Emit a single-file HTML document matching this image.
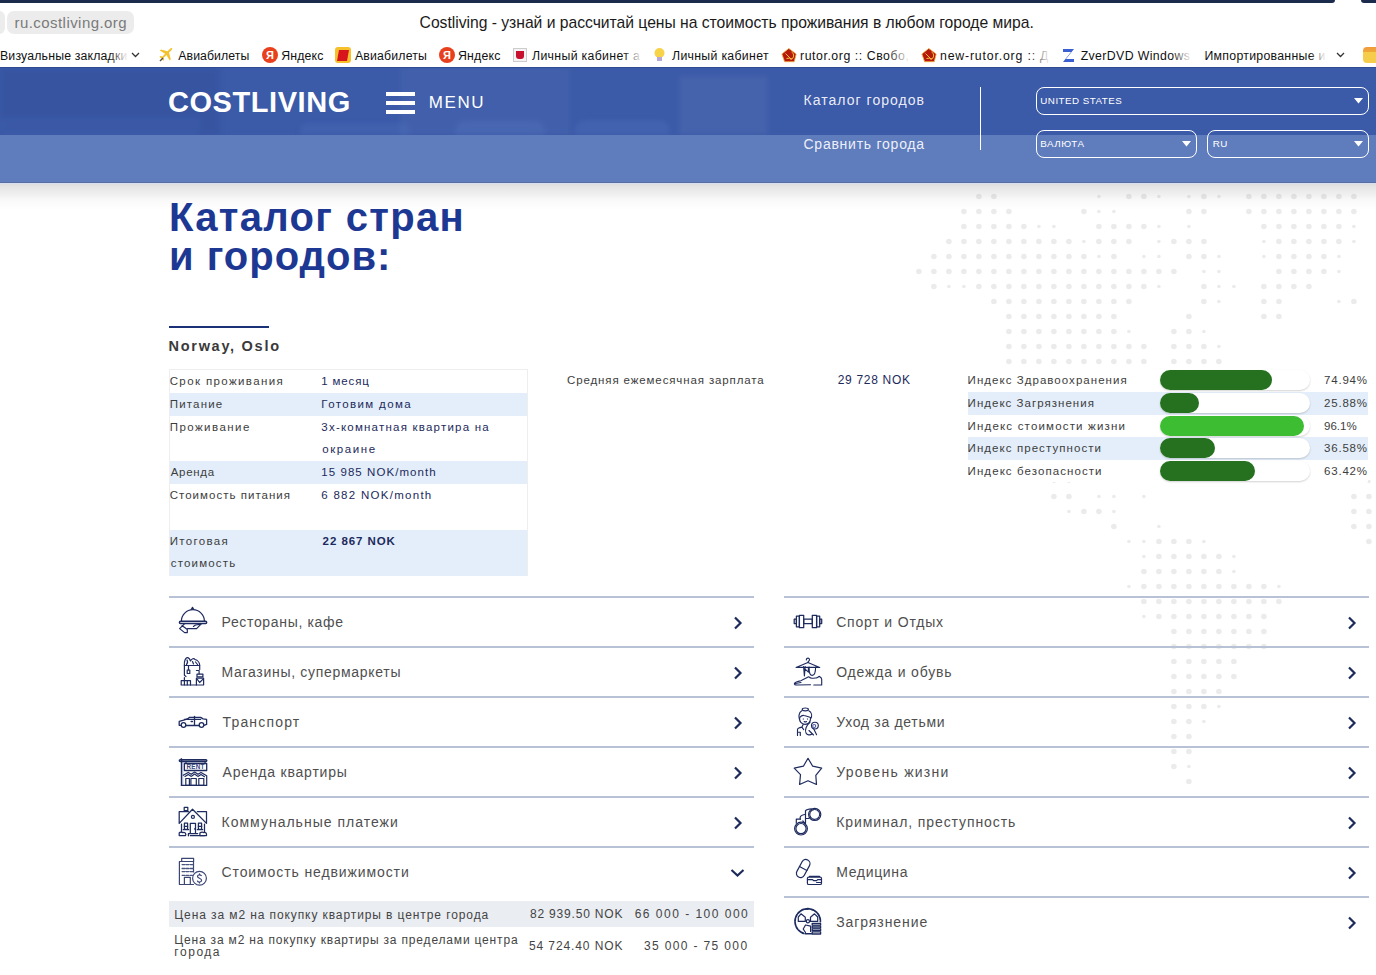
<!DOCTYPE html>
<html><head><meta charset="utf-8">
<style>
*{margin:0;padding:0;box-sizing:border-box}
html,body{width:1376px;height:975px;overflow:hidden;background:#fff;font-family:"Liberation Sans",sans-serif;position:relative}
.t{position:absolute;white-space:nowrap;line-height:1}
svg{overflow:visible}
</style></head><body>
<svg style="position:absolute;left:0;top:0" width="1376" height="975" viewBox="0 0 1376 975"><g fill="#ebebeb"><circle cx="978.9" cy="196.5" r="2.8"/><circle cx="993.9" cy="196.5" r="2.8"/><circle cx="1128.9" cy="196.5" r="2.8"/><circle cx="1143.9" cy="196.5" r="2.8"/><circle cx="1203.9" cy="196.5" r="2.8"/><circle cx="1248.9" cy="196.5" r="2.8"/><circle cx="1263.9" cy="196.5" r="2.8"/><circle cx="1278.9" cy="196.5" r="2.8"/><circle cx="1293.9" cy="196.5" r="2.8"/><circle cx="1308.9" cy="196.5" r="2.8"/><circle cx="1323.9" cy="196.5" r="2.8"/><circle cx="1338.9" cy="196.5" r="2.8"/><circle cx="1353.9" cy="196.5" r="2.8"/><circle cx="1218.9" cy="196.5" r="1.8"/><circle cx="1098.9" cy="196.5" r="1.8"/><circle cx="1158.9" cy="196.5" r="1.8"/><circle cx="1188.9" cy="196.5" r="1.8"/><circle cx="963.9" cy="211.5" r="2.8"/><circle cx="978.9" cy="211.5" r="2.8"/><circle cx="993.9" cy="211.5" r="2.8"/><circle cx="1008.9" cy="211.5" r="2.8"/><circle cx="1083.9" cy="211.5" r="2.8"/><circle cx="1188.9" cy="211.5" r="2.8"/><circle cx="1203.9" cy="211.5" r="2.8"/><circle cx="1248.9" cy="211.5" r="2.8"/><circle cx="1263.9" cy="211.5" r="2.8"/><circle cx="1278.9" cy="211.5" r="2.8"/><circle cx="1293.9" cy="211.5" r="2.8"/><circle cx="1308.9" cy="211.5" r="2.8"/><circle cx="1323.9" cy="211.5" r="2.8"/><circle cx="1338.9" cy="211.5" r="2.8"/><circle cx="1353.9" cy="211.5" r="2.8"/><circle cx="1098.9" cy="211.5" r="1.8"/><circle cx="1113.9" cy="211.5" r="1.8"/><circle cx="963.9" cy="226.5" r="2.8"/><circle cx="978.9" cy="226.5" r="2.8"/><circle cx="993.9" cy="226.5" r="2.8"/><circle cx="1008.9" cy="226.5" r="2.8"/><circle cx="1023.9" cy="226.5" r="2.8"/><circle cx="1098.9" cy="226.5" r="2.8"/><circle cx="1113.9" cy="226.5" r="2.8"/><circle cx="1128.9" cy="226.5" r="2.8"/><circle cx="1143.9" cy="226.5" r="2.8"/><circle cx="1263.9" cy="226.5" r="2.8"/><circle cx="1278.9" cy="226.5" r="2.8"/><circle cx="1293.9" cy="226.5" r="2.8"/><circle cx="1308.9" cy="226.5" r="2.8"/><circle cx="1323.9" cy="226.5" r="2.8"/><circle cx="1338.9" cy="226.5" r="2.8"/><circle cx="1038.9" cy="226.5" r="1.8"/><circle cx="1053.9" cy="226.5" r="1.8"/><circle cx="1158.9" cy="226.5" r="1.8"/><circle cx="1188.9" cy="226.5" r="1.8"/><circle cx="1353.9" cy="226.5" r="1.8"/><circle cx="948.9" cy="241.5" r="2.8"/><circle cx="963.9" cy="241.5" r="2.8"/><circle cx="978.9" cy="241.5" r="2.8"/><circle cx="993.9" cy="241.5" r="2.8"/><circle cx="1008.9" cy="241.5" r="2.8"/><circle cx="1023.9" cy="241.5" r="2.8"/><circle cx="1038.9" cy="241.5" r="2.8"/><circle cx="1053.9" cy="241.5" r="2.8"/><circle cx="1068.9" cy="241.5" r="2.8"/><circle cx="1098.9" cy="241.5" r="2.8"/><circle cx="1113.9" cy="241.5" r="2.8"/><circle cx="1128.9" cy="241.5" r="2.8"/><circle cx="1173.9" cy="241.5" r="2.8"/><circle cx="1188.9" cy="241.5" r="2.8"/><circle cx="1203.9" cy="241.5" r="2.8"/><circle cx="1278.9" cy="241.5" r="2.8"/><circle cx="1293.9" cy="241.5" r="2.8"/><circle cx="1308.9" cy="241.5" r="2.8"/><circle cx="1323.9" cy="241.5" r="2.8"/><circle cx="1338.9" cy="241.5" r="2.8"/><circle cx="1083.9" cy="241.5" r="1.8"/><circle cx="1353.9" cy="241.5" r="1.8"/><circle cx="1263.9" cy="241.5" r="1.8"/><circle cx="1158.9" cy="241.5" r="1.8"/><circle cx="963.9" cy="256.5" r="2.8"/><circle cx="978.9" cy="256.5" r="2.8"/><circle cx="993.9" cy="256.5" r="2.8"/><circle cx="1008.9" cy="256.5" r="2.8"/><circle cx="1023.9" cy="256.5" r="2.8"/><circle cx="1038.9" cy="256.5" r="2.8"/><circle cx="1053.9" cy="256.5" r="2.8"/><circle cx="1068.9" cy="256.5" r="2.8"/><circle cx="1083.9" cy="256.5" r="2.8"/><circle cx="1113.9" cy="256.5" r="2.8"/><circle cx="1188.9" cy="256.5" r="2.8"/><circle cx="1203.9" cy="256.5" r="2.8"/><circle cx="1278.9" cy="256.5" r="2.8"/><circle cx="1293.9" cy="256.5" r="2.8"/><circle cx="1308.9" cy="256.5" r="2.8"/><circle cx="1323.9" cy="256.5" r="2.8"/><circle cx="933.9" cy="256.5" r="2.8"/><circle cx="948.9" cy="256.5" r="2.8"/><circle cx="1098.9" cy="256.5" r="1.8"/><circle cx="1143.9" cy="256.5" r="1.8"/><circle cx="1158.9" cy="256.5" r="1.8"/><circle cx="1218.9" cy="256.5" r="1.8"/><circle cx="1263.9" cy="256.5" r="1.8"/><circle cx="1338.9" cy="256.5" r="1.8"/><circle cx="918.9" cy="271.5" r="2.8"/><circle cx="933.9" cy="271.5" r="2.8"/><circle cx="948.9" cy="271.5" r="2.8"/><circle cx="963.9" cy="271.5" r="2.8"/><circle cx="978.9" cy="271.5" r="2.8"/><circle cx="993.9" cy="271.5" r="2.8"/><circle cx="1008.9" cy="271.5" r="2.8"/><circle cx="1023.9" cy="271.5" r="2.8"/><circle cx="1038.9" cy="271.5" r="2.8"/><circle cx="1053.9" cy="271.5" r="2.8"/><circle cx="1068.9" cy="271.5" r="2.8"/><circle cx="1083.9" cy="271.5" r="2.8"/><circle cx="1098.9" cy="271.5" r="2.8"/><circle cx="1113.9" cy="271.5" r="2.8"/><circle cx="1128.9" cy="271.5" r="2.8"/><circle cx="1143.9" cy="271.5" r="2.8"/><circle cx="1158.9" cy="271.5" r="2.8"/><circle cx="1173.9" cy="271.5" r="2.8"/><circle cx="1278.9" cy="271.5" r="2.8"/><circle cx="1293.9" cy="271.5" r="2.8"/><circle cx="1308.9" cy="271.5" r="2.8"/><circle cx="1323.9" cy="271.5" r="2.8"/><circle cx="1203.9" cy="271.5" r="1.8"/><circle cx="1218.9" cy="271.5" r="1.8"/><circle cx="1338.9" cy="271.5" r="1.8"/><circle cx="978.9" cy="286.5" r="2.8"/><circle cx="993.9" cy="286.5" r="2.8"/><circle cx="1008.9" cy="286.5" r="2.8"/><circle cx="1023.9" cy="286.5" r="2.8"/><circle cx="1038.9" cy="286.5" r="2.8"/><circle cx="1053.9" cy="286.5" r="2.8"/><circle cx="1068.9" cy="286.5" r="2.8"/><circle cx="1083.9" cy="286.5" r="2.8"/><circle cx="1098.9" cy="286.5" r="2.8"/><circle cx="1113.9" cy="286.5" r="2.8"/><circle cx="1128.9" cy="286.5" r="2.8"/><circle cx="1143.9" cy="286.5" r="2.8"/><circle cx="1203.9" cy="286.5" r="2.8"/><circle cx="1263.9" cy="286.5" r="2.8"/><circle cx="1278.9" cy="286.5" r="2.8"/><circle cx="1293.9" cy="286.5" r="2.8"/><circle cx="1308.9" cy="286.5" r="2.8"/><circle cx="933.9" cy="286.5" r="2.8"/><circle cx="963.9" cy="286.5" r="1.8"/><circle cx="1158.9" cy="286.5" r="1.8"/><circle cx="1218.9" cy="286.5" r="1.8"/><circle cx="1233.9" cy="286.5" r="1.8"/><circle cx="948.9" cy="286.5" r="1.8"/><circle cx="993.9" cy="301.5" r="2.8"/><circle cx="1008.9" cy="301.5" r="2.8"/><circle cx="1023.9" cy="301.5" r="2.8"/><circle cx="1038.9" cy="301.5" r="2.8"/><circle cx="1053.9" cy="301.5" r="2.8"/><circle cx="1068.9" cy="301.5" r="2.8"/><circle cx="1083.9" cy="301.5" r="2.8"/><circle cx="1098.9" cy="301.5" r="2.8"/><circle cx="1113.9" cy="301.5" r="2.8"/><circle cx="1128.9" cy="301.5" r="2.8"/><circle cx="1203.9" cy="301.5" r="2.8"/><circle cx="1263.9" cy="301.5" r="2.8"/><circle cx="1278.9" cy="301.5" r="2.8"/><circle cx="1353.9" cy="301.5" r="2.8"/><circle cx="1338.9" cy="301.5" r="1.8"/><circle cx="1218.9" cy="301.5" r="1.8"/><circle cx="1008.9" cy="316.5" r="2.8"/><circle cx="1023.9" cy="316.5" r="2.8"/><circle cx="1038.9" cy="316.5" r="2.8"/><circle cx="1053.9" cy="316.5" r="2.8"/><circle cx="1068.9" cy="316.5" r="2.8"/><circle cx="1083.9" cy="316.5" r="2.8"/><circle cx="1098.9" cy="316.5" r="2.8"/><circle cx="1113.9" cy="316.5" r="2.8"/><circle cx="1188.9" cy="316.5" r="2.8"/><circle cx="1263.9" cy="316.5" r="2.8"/><circle cx="1278.9" cy="316.5" r="2.8"/><circle cx="1008.9" cy="331.5" r="2.8"/><circle cx="1023.9" cy="331.5" r="2.8"/><circle cx="1038.9" cy="331.5" r="2.8"/><circle cx="1053.9" cy="331.5" r="2.8"/><circle cx="1068.9" cy="331.5" r="2.8"/><circle cx="1083.9" cy="331.5" r="2.8"/><circle cx="1098.9" cy="331.5" r="2.8"/><circle cx="1113.9" cy="331.5" r="2.8"/><circle cx="1173.9" cy="331.5" r="2.8"/><circle cx="1188.9" cy="331.5" r="2.8"/><circle cx="1203.9" cy="331.5" r="1.8"/><circle cx="1128.9" cy="331.5" r="1.8"/><circle cx="1008.9" cy="346.5" r="2.8"/><circle cx="1023.9" cy="346.5" r="2.8"/><circle cx="1038.9" cy="346.5" r="2.8"/><circle cx="1053.9" cy="346.5" r="2.8"/><circle cx="1068.9" cy="346.5" r="2.8"/><circle cx="1083.9" cy="346.5" r="2.8"/><circle cx="1098.9" cy="346.5" r="2.8"/><circle cx="1113.9" cy="346.5" r="2.8"/><circle cx="1128.9" cy="346.5" r="2.8"/><circle cx="1143.9" cy="346.5" r="2.8"/><circle cx="1173.9" cy="346.5" r="2.8"/><circle cx="1188.9" cy="346.5" r="2.8"/><circle cx="1203.9" cy="346.5" r="2.8"/><circle cx="1218.9" cy="346.5" r="1.8"/><circle cx="1008.9" cy="361.5" r="2.8"/><circle cx="1023.9" cy="361.5" r="2.8"/><circle cx="1038.9" cy="361.5" r="2.8"/><circle cx="1053.9" cy="361.5" r="2.8"/><circle cx="1068.9" cy="361.5" r="2.8"/><circle cx="1083.9" cy="361.5" r="2.8"/><circle cx="1098.9" cy="361.5" r="2.8"/><circle cx="1113.9" cy="361.5" r="2.8"/><circle cx="1128.9" cy="361.5" r="2.8"/><circle cx="1143.9" cy="361.5" r="2.8"/><circle cx="1173.9" cy="361.5" r="2.8"/><circle cx="1188.9" cy="361.5" r="2.8"/><circle cx="1203.9" cy="361.5" r="2.8"/><circle cx="1218.9" cy="361.5" r="2.8"/><circle cx="1368.9" cy="481.5" r="1.8"/><circle cx="1053.9" cy="481.5" r="1.8"/><circle cx="1068.9" cy="481.5" r="1.8"/><circle cx="1353.9" cy="496.5" r="2.8"/><circle cx="1368.9" cy="496.5" r="2.8"/><circle cx="1053.9" cy="496.5" r="2.8"/><circle cx="1068.9" cy="496.5" r="2.8"/><circle cx="1098.9" cy="496.5" r="1.8"/><circle cx="1113.9" cy="496.5" r="1.8"/><circle cx="1143.9" cy="496.5" r="1.8"/><circle cx="1083.9" cy="511.5" r="2.8"/><circle cx="1098.9" cy="511.5" r="2.8"/><circle cx="1353.9" cy="511.5" r="2.8"/><circle cx="1368.9" cy="511.5" r="2.8"/><circle cx="1113.9" cy="511.5" r="1.8"/><circle cx="1068.9" cy="511.5" r="1.8"/><circle cx="1113.9" cy="526.5" r="2.8"/><circle cx="1368.9" cy="526.5" r="2.8"/><circle cx="1353.9" cy="526.5" r="2.8"/><circle cx="1158.9" cy="526.5" r="1.8"/><circle cx="1368.9" cy="541.5" r="2.8"/><circle cx="1158.9" cy="541.5" r="2.8"/><circle cx="1173.9" cy="541.5" r="2.8"/><circle cx="1188.9" cy="541.5" r="2.8"/><circle cx="1203.9" cy="541.5" r="1.8"/><circle cx="1128.9" cy="541.5" r="1.8"/><circle cx="1143.9" cy="541.5" r="1.8"/><circle cx="1158.9" cy="556.5" r="2.8"/><circle cx="1173.9" cy="556.5" r="2.8"/><circle cx="1188.9" cy="556.5" r="2.8"/><circle cx="1203.9" cy="556.5" r="2.8"/><circle cx="1218.9" cy="556.5" r="2.8"/><circle cx="1233.9" cy="556.5" r="1.8"/><circle cx="1143.9" cy="556.5" r="1.8"/><circle cx="1143.9" cy="571.5" r="2.8"/><circle cx="1158.9" cy="571.5" r="2.8"/><circle cx="1173.9" cy="571.5" r="2.8"/><circle cx="1188.9" cy="571.5" r="2.8"/><circle cx="1203.9" cy="571.5" r="2.8"/><circle cx="1218.9" cy="571.5" r="2.8"/><circle cx="1233.9" cy="571.5" r="1.8"/><circle cx="1143.9" cy="586.5" r="2.8"/><circle cx="1158.9" cy="586.5" r="2.8"/><circle cx="1173.9" cy="586.5" r="2.8"/><circle cx="1188.9" cy="586.5" r="2.8"/><circle cx="1203.9" cy="586.5" r="2.8"/><circle cx="1218.9" cy="586.5" r="2.8"/><circle cx="1233.9" cy="586.5" r="2.8"/><circle cx="1248.9" cy="586.5" r="2.8"/><circle cx="1263.9" cy="586.5" r="2.8"/><circle cx="1128.9" cy="586.5" r="1.8"/><circle cx="1278.9" cy="586.5" r="1.8"/><circle cx="1143.9" cy="601.5" r="2.8"/><circle cx="1158.9" cy="601.5" r="2.8"/><circle cx="1173.9" cy="601.5" r="2.8"/><circle cx="1188.9" cy="601.5" r="2.8"/><circle cx="1203.9" cy="601.5" r="2.8"/><circle cx="1218.9" cy="601.5" r="2.8"/><circle cx="1233.9" cy="601.5" r="2.8"/><circle cx="1248.9" cy="601.5" r="2.8"/><circle cx="1263.9" cy="601.5" r="2.8"/><circle cx="1278.9" cy="601.5" r="2.8"/><circle cx="1158.9" cy="616.5" r="2.8"/><circle cx="1173.9" cy="616.5" r="2.8"/><circle cx="1188.9" cy="616.5" r="2.8"/><circle cx="1203.9" cy="616.5" r="2.8"/><circle cx="1218.9" cy="616.5" r="2.8"/><circle cx="1233.9" cy="616.5" r="2.8"/><circle cx="1248.9" cy="616.5" r="2.8"/><circle cx="1263.9" cy="616.5" r="2.8"/><circle cx="1143.9" cy="616.5" r="1.8"/><circle cx="1173.9" cy="631.5" r="2.8"/><circle cx="1188.9" cy="631.5" r="2.8"/><circle cx="1203.9" cy="631.5" r="2.8"/><circle cx="1218.9" cy="631.5" r="2.8"/><circle cx="1233.9" cy="631.5" r="2.8"/><circle cx="1248.9" cy="631.5" r="2.8"/><circle cx="1263.9" cy="631.5" r="2.8"/><circle cx="1173.9" cy="646.5" r="2.8"/><circle cx="1188.9" cy="646.5" r="2.8"/><circle cx="1203.9" cy="646.5" r="2.8"/><circle cx="1218.9" cy="646.5" r="2.8"/><circle cx="1233.9" cy="646.5" r="2.8"/><circle cx="1248.9" cy="646.5" r="2.8"/><circle cx="1263.9" cy="646.5" r="2.8"/><circle cx="1173.9" cy="661.5" r="2.8"/><circle cx="1188.9" cy="661.5" r="2.8"/><circle cx="1203.9" cy="661.5" r="2.8"/><circle cx="1218.9" cy="661.5" r="2.8"/><circle cx="1233.9" cy="661.5" r="2.8"/><circle cx="1173.9" cy="676.5" r="2.8"/><circle cx="1188.9" cy="676.5" r="2.8"/><circle cx="1203.9" cy="676.5" r="2.8"/><circle cx="1218.9" cy="676.5" r="2.8"/><circle cx="1233.9" cy="676.5" r="2.8"/><circle cx="1203.9" cy="691.5" r="2.8"/><circle cx="1218.9" cy="691.5" r="2.8"/><circle cx="1173.9" cy="691.5" r="2.8"/><circle cx="1188.9" cy="691.5" r="2.8"/><circle cx="1203.9" cy="706.5" r="2.8"/><circle cx="1173.9" cy="706.5" r="2.8"/><circle cx="1188.9" cy="706.5" r="2.8"/><circle cx="1218.9" cy="706.5" r="1.8"/><circle cx="1173.9" cy="721.5" r="2.8"/><circle cx="1188.9" cy="721.5" r="2.8"/><circle cx="1203.9" cy="721.5" r="1.8"/><circle cx="1173.9" cy="736.5" r="2.8"/><circle cx="1188.9" cy="736.5" r="2.8"/><circle cx="1173.9" cy="751.5" r="2.8"/><circle cx="1188.9" cy="751.5" r="2.8"/><circle cx="1173.9" cy="766.5" r="2.8"/><circle cx="1188.9" cy="766.5" r="1.8"/><circle cx="1188.9" cy="781.5" r="2.8"/></g></svg>
<div style="position:absolute;left:0px;top:0px;width:1335px;height:3px;background:#1b2b4e;border-bottom-right-radius:3px"></div>
<div style="position:absolute;left:1361px;top:0px;width:15px;height:3px;background:#1b2b4e;border-bottom-left-radius:3px"></div>
<div style="position:absolute;left:-12px;top:11px;width:17px;height:23px;background:#ececec;border-radius:6px"></div>
<div style="position:absolute;left:7px;top:11px;width:127px;height:23px;background:#ececec;border-radius:7px"></div>
<div class="t" style="left:14.50px;top:14.90px;font-size:15px;color:#7a7a7a;font-weight:400;letter-spacing:0.444px;">ru.costliving.org</div>
<div class="t" style="left:419.60px;top:15.10px;font-size:15.7px;color:#1a1a1a;font-weight:400;letter-spacing:-0.020px;">Costliving - узнай и рассчитай цены на стоимость проживания в любом городе мира.</div>
<div class="t" style="left:0.00px;top:49.60px;font-size:12.3px;color:#111;font-weight:400;letter-spacing:0.167px;">Визуальные закладки</div>
<div style="position:absolute;left:110px;top:44px;width:18px;height:20px;background:linear-gradient(90deg,rgba(255,255,255,0),#fff)"></div>
<svg style="position:absolute;left:131px;top:52px" width="9" height="6" viewBox="0 0 9 6"><path d="M1 1l3.5 3.5L8 1" stroke="#333" stroke-width="1.3" fill="none"/></svg>
<svg style="position:absolute;left:158px;top:47px" width="16" height="16" viewBox="0 0 16 16"><path d="M14.5 1.2c-.8-.6-2 .1-2.7.8L9.6 4.2 3 2.4 1.8 3.5l5.3 3.3-2.6 2.7-2.2-.4-.9.9 2.3 1.5 1.5 2.3.9-.9-.4-2.2 2.7-2.6 3.3 5.3 1.1-1.2-1.8-6.6 2.2-2.2c.7-.7 1.4-1.9.8-2.7z" fill="#f2c230"/><path d="M2 14l3-3" stroke="#555" stroke-width="1.5"/></svg>
<div class="t" style="left:178.30px;top:49.60px;font-size:12.3px;color:#111;font-weight:400;letter-spacing:0.056px;">Авиабилеты</div>
<div style="position:absolute;left:262px;top:47px;width:16px;height:16px;border-radius:50%;background:#e8401c;color:#fff;font:bold 11px/16px 'Liberation Sans',sans-serif;text-align:center">Я</div>
<div class="t" style="left:281.30px;top:49.60px;font-size:12.3px;color:#111;font-weight:400;letter-spacing:0.140px;">Яндекс</div>
<div style="position:absolute;left:335px;top:47px;width:16px;height:16px;background:#f5c02a;border-radius:3px"></div><div style="position:absolute;left:338px;top:50px;width:10px;height:11px;background:#d8141c;transform:skewX(-10deg)"></div>
<div class="t" style="left:355.00px;top:49.60px;font-size:12.3px;color:#111;font-weight:400;letter-spacing:0.167px;">Авиабилеты</div>
<div style="position:absolute;left:439px;top:47px;width:16px;height:16px;border-radius:50%;background:#e8401c;color:#fff;font:bold 11px/16px 'Liberation Sans',sans-serif;text-align:center">Я</div>
<div class="t" style="left:458.00px;top:49.60px;font-size:12.3px;color:#111;font-weight:400;letter-spacing:0.200px;">Яндекс</div>
<div style="position:absolute;left:513px;top:48px;width:14px;height:14px;border:1px solid #ccc;background:#f4f4f4"></div><div style="position:absolute;left:516px;top:51px;width:8px;height:8px;background:#c8102e;border-radius:0 0 3px 3px"></div>
<div class="t" style="left:532.00px;top:49.60px;font-size:12.3px;color:#111;font-weight:400;letter-spacing:0.333px;">Личный кабинет а</div>
<div style="position:absolute;left:624px;top:44px;width:18px;height:20px;background:linear-gradient(90deg,rgba(255,255,255,0),#fff)"></div>
<svg style="position:absolute;left:653px;top:47px" width="13" height="16" viewBox="0 0 13 16"><circle cx="6.5" cy="6" r="5" fill="#f7d34a"/><rect x="4" y="10" width="5" height="4" fill="#b7a8d8"/></svg>
<div class="t" style="left:672.00px;top:49.60px;font-size:12.3px;color:#111;font-weight:400;letter-spacing:0.308px;">Личный кабинет</div>
<svg style="position:absolute;left:781px;top:47px" width="16" height="16" viewBox="0 0 16 16"><path d="M7.8 1.4L15.2 7 13.2 14.7H3.6L.9 7z" fill="#b4190c" stroke="#f0b040" stroke-width=".8" stroke-linejoin="round"/><path d="M4.5 6.5L10 12M10.5 5a4 4 0 0 1 -1 7.5M5.5 11.5c2 -.5 4 -.3 5.5 .5" stroke="#f5c040" stroke-width="1" fill="none"/></svg>
<div class="t" style="left:800.00px;top:49.60px;font-size:12.3px;color:#111;font-weight:400;letter-spacing:0.556px;">rutor.org :: Свобо,</div>
<div style="position:absolute;left:888px;top:44px;width:22px;height:20px;background:linear-gradient(90deg,rgba(255,255,255,0),#fff)"></div>
<svg style="position:absolute;left:921px;top:47px" width="16" height="16" viewBox="0 0 16 16"><path d="M7.8 1.4L15.2 7 13.2 14.7H3.6L.9 7z" fill="#b4190c" stroke="#f0b040" stroke-width=".8" stroke-linejoin="round"/><path d="M4.5 6.5L10 12M10.5 5a4 4 0 0 1 -1 7.5M5.5 11.5c2 -.5 4 -.3 5.5 .5" stroke="#f5c040" stroke-width="1" fill="none"/></svg>
<div class="t" style="left:940.00px;top:49.60px;font-size:12.3px;color:#111;font-weight:400;letter-spacing:0.824px;">new-rutor.org :: Д</div>
<div style="position:absolute;left:1030px;top:44px;width:20px;height:20px;background:linear-gradient(90deg,rgba(255,255,255,0),#fff)"></div>
<svg style="position:absolute;left:1062px;top:47px" width="13" height="16" viewBox="0 0 13 16"><path d="M1 2h11L4 12h8v3H1l8-10H1z" fill="#3a5fd0"/></svg>
<div class="t" style="left:1080.70px;top:49.60px;font-size:12.3px;color:#111;font-weight:400;letter-spacing:0.379px;">ZverDVD Windows</div>
<div style="position:absolute;left:1172px;top:44px;width:20px;height:20px;background:linear-gradient(90deg,rgba(255,255,255,0),#fff)"></div>
<div class="t" style="left:1204.50px;top:49.60px;font-size:12.3px;color:#111;font-weight:400;letter-spacing:0.281px;">Импортированные и</div>
<div style="position:absolute;left:1310px;top:44px;width:16px;height:20px;background:linear-gradient(90deg,rgba(255,255,255,0),#fff)"></div>
<svg style="position:absolute;left:1336px;top:52px" width="9" height="6" viewBox="0 0 9 6"><path d="M1 1l3.5 3.5L8 1" stroke="#333" stroke-width="1.3" fill="none"/></svg>
<div style="position:absolute;left:1363px;top:47px;width:16px;height:16px;background:linear-gradient(#f09a3a 0,#f0a83a 30%,#f5cd4a 31%);border-radius:4px"></div>
<div style="position:absolute;left:0px;top:67px;width:1376px;height:68px;background:#3b5aa8"></div>
<div style="position:absolute;left:0px;top:67px;width:1376px;height:1px;background:#2f4c93"></div>
<div style="position:absolute;left:0;top:68px;width:1376px;height:67px;overflow:hidden"><div style="position:absolute;left:0;top:0;width:1376px;height:67px;filter:blur(2.5px)"><div style="position:absolute;left:0;top:0;width:220px;height:67px;background:rgba(20,40,110,.10)"></div><div style="position:absolute;left:400px;top:0;width:170px;height:67px;background:rgba(255,255,255,.035)"></div><div style="position:absolute;left:679px;top:8px;width:89px;height:59px;background:rgba(255,255,255,.05)"></div><div style="position:absolute;left:300px;top:55px;width:110px;height:12px;background:rgba(140,180,255,.08);border-radius:8px 8px 0 0"></div><div style="position:absolute;left:455px;top:53px;width:90px;height:14px;background:rgba(140,180,255,.09);border-radius:10px 10px 0 0"></div><div style="position:absolute;left:575px;top:52px;width:95px;height:15px;background:rgba(140,180,255,.09);border-radius:10px 10px 0 0"></div><div style="position:absolute;left:0;top:50px;width:200px;height:17px;background:rgba(140,180,255,.05)"></div></div></div>
<div style="position:absolute;left:0px;top:135px;width:1376px;height:47px;background:#5f7dbd"></div>
<div style="position:absolute;left:0px;top:182px;width:1376px;height:1px;background:#5a6da0"></div>
<div style="position:absolute;left:0px;top:183px;width:1376px;height:1px;background:#d6e0f0"></div>
<div style="position:absolute;left:0px;top:184px;width:1376px;height:26px;background:linear-gradient(rgba(0,0,0,.13),rgba(0,0,0,.10) 12%,rgba(0,0,0,.075) 30%,rgba(0,0,0,.05) 46%,rgba(0,0,0,.024) 62%,rgba(0,0,0,.01) 80%,rgba(0,0,0,0))"></div>
<div class="t" style="left:168.00px;top:88.00px;font-size:29px;color:#fff;font-weight:700;letter-spacing:0.556px;">COSTLIVING</div>
<div style="position:absolute;left:386px;top:92px;width:29px;height:4px;background:#fff"></div>
<div style="position:absolute;left:386px;top:101px;width:29px;height:4px;background:#fff"></div>
<div style="position:absolute;left:386px;top:110px;width:29px;height:4px;background:#fff"></div>
<div class="t" style="left:428.70px;top:94.40px;font-size:17px;color:#fff;font-weight:400;letter-spacing:1.600px;">MENU</div>
<div class="t" style="left:803.50px;top:93.40px;font-size:14px;color:rgba(255,255,255,.9);font-weight:400;letter-spacing:1.036px;">Каталог городов</div>
<div class="t" style="left:803.50px;top:136.70px;font-size:14px;color:rgba(255,255,255,.9);font-weight:400;letter-spacing:0.750px;">Сравнить города</div>
<div style="position:absolute;left:980px;top:87px;width:1px;height:63px;background:#fff"></div>
<div style="position:absolute;left:1036px;top:87px;width:333px;height:28px;border:1px solid #fff;border-radius:8px"></div>
<div class="t" style="left:1040.30px;top:95.80px;font-size:9.8px;color:#fff;font-weight:400;letter-spacing:0.475px;">UNITED STATES</div>
<svg style="position:absolute;left:1354px;top:98px" width="9" height="6" viewBox="0 0 9 6"><path d="M0 0h9L4.5 5.5z" fill="#fff"/></svg>
<div style="position:absolute;left:1036px;top:130px;width:161px;height:28px;border:1px solid #fff;border-radius:8px"></div>
<div class="t" style="left:1040.30px;top:138.80px;font-size:9.8px;color:#fff;font-weight:400;letter-spacing:0.540px;">ВАЛЮТА</div>
<svg style="position:absolute;left:1182px;top:141px" width="9" height="6" viewBox="0 0 9 6"><path d="M0 0h9L4.5 5.5z" fill="#fff"/></svg>
<div style="position:absolute;left:1207px;top:130px;width:162px;height:28px;border:1px solid #fff;border-radius:8px"></div>
<div class="t" style="left:1212.70px;top:138.80px;font-size:9.8px;color:#fff;font-weight:400;letter-spacing:0.600px;">RU</div>
<svg style="position:absolute;left:1354px;top:141px" width="9" height="6" viewBox="0 0 9 6"><path d="M0 0h9L4.5 5.5z" fill="#fff"/></svg>
<div class="t" style="left:169.00px;top:196.90px;font-size:40px;color:#1d3893;font-weight:700;letter-spacing:1.333px;">Каталог стран</div>
<div class="t" style="left:169.00px;top:236.30px;font-size:40px;color:#1d3893;font-weight:700;letter-spacing:1.000px;">и городов:</div>
<div style="position:absolute;left:169px;top:326px;width:100px;height:2px;background:#1b3177"></div>
<div class="t" style="left:168.50px;top:339.00px;font-size:14.5px;color:#3a3a3a;font-weight:700;letter-spacing:1.718px;">Norway, Oslo</div>
<div style="position:absolute;left:169px;top:369px;width:359px;height:207px;border:1px solid #eee;border-bottom:none"></div>
<div style="position:absolute;left:170px;top:393px;width:357px;height:23px;background:#e3eefa"></div>
<div style="position:absolute;left:170px;top:461px;width:357px;height:23px;background:#e3eefa"></div>
<div style="position:absolute;left:170px;top:530px;width:357px;height:46px;background:#e3eefa"></div>
<div class="t" style="left:169.70px;top:375.60px;font-size:11.5px;color:#3d3d3d;font-weight:400;letter-spacing:1.379px;">Срок проживания</div>
<div class="t" style="left:321.30px;top:375.60px;font-size:11.5px;color:#1c2a5c;font-weight:400;letter-spacing:0.850px;">1 месяц</div>
<div class="t" style="left:169.70px;top:399.20px;font-size:11.5px;color:#3d3d3d;font-weight:400;letter-spacing:1.183px;">Питание</div>
<div class="t" style="left:321.30px;top:399.20px;font-size:11.5px;color:#1c2a5c;font-weight:400;letter-spacing:1.373px;">Готовим дома</div>
<div class="t" style="left:169.70px;top:421.50px;font-size:11.5px;color:#3d3d3d;font-weight:400;letter-spacing:1.444px;">Проживание</div>
<div class="t" style="left:321.30px;top:421.50px;font-size:11.5px;color:#1c2a5c;font-weight:400;letter-spacing:1.217px;">3х-комнатная квартира на</div>
<div class="t" style="left:322.30px;top:444.00px;font-size:11.5px;color:#1c2a5c;font-weight:400;letter-spacing:1.567px;">окраине</div>
<div class="t" style="left:170.70px;top:466.80px;font-size:11.5px;color:#3d3d3d;font-weight:400;letter-spacing:0.700px;">Аренда</div>
<div class="t" style="left:321.30px;top:466.80px;font-size:11.5px;color:#1c2a5c;font-weight:400;letter-spacing:1.060px;">15 985 NOK/month</div>
<div class="t" style="left:169.70px;top:489.80px;font-size:11.5px;color:#3d3d3d;font-weight:400;letter-spacing:1.025px;">Стоимость питания</div>
<div class="t" style="left:321.30px;top:489.80px;font-size:11.5px;color:#1c2a5c;font-weight:400;letter-spacing:1.279px;">6 882 NOK/month</div>
<div class="t" style="left:170.70px;top:558.00px;font-size:11.5px;color:#3d3d3d;font-weight:400;letter-spacing:1.188px;">стоимость</div>
<div class="t" style="left:169.70px;top:535.50px;font-size:11.5px;color:#3d3d3d;font-weight:400;letter-spacing:1.329px;">Итоговая</div>
<div class="t" style="left:322.60px;top:535.50px;font-size:11.5px;color:#1c2a5c;font-weight:700;letter-spacing:0.933px;">22 867 NOK</div>
<div class="t" style="left:567.00px;top:374.80px;font-size:11.5px;color:#3d3d3d;font-weight:400;letter-spacing:0.878px;">Средняя ежемесячная зарплата</div>
<div class="t" style="left:837.70px;top:373.80px;font-size:12px;color:#1c2a5c;font-weight:400;letter-spacing:0.689px;">29 728 NOK</div>
<div style="position:absolute;left:968px;top:369px;width:400px;height:113px;background:#fff"></div>
<div style="position:absolute;left:968px;top:392px;width:400px;height:23px;background:#e3eefa"></div>
<div style="position:absolute;left:968px;top:437px;width:400px;height:23px;background:#e3eefa"></div>
<div class="t" style="left:967.60px;top:375.10px;font-size:11.5px;color:#3d3d3d;font-weight:400;letter-spacing:1.043px;">Индекс Здравоохранения</div>
<div style="position:absolute;left:1160px;top:370.1px;width:150px;height:20px;background:#fff;border-radius:10px;box-shadow:0 1px 2px rgba(0,0,0,.18)"></div>
<div style="position:absolute;left:1160px;top:370.1px;width:112px;height:20px;background:#25711f;border-radius:10px"></div>
<div class="t" style="left:1324.00px;top:375.10px;font-size:11.5px;color:#3d3d3d;font-weight:400;letter-spacing:0.800px;">74.94%</div>
<div class="t" style="left:967.60px;top:398.00px;font-size:11.5px;color:#3d3d3d;font-weight:400;letter-spacing:1.024px;">Индекс Загрязнения</div>
<div style="position:absolute;left:1160px;top:393px;width:150px;height:20px;background:#fff;border-radius:10px;box-shadow:0 1px 2px rgba(0,0,0,.18)"></div>
<div style="position:absolute;left:1160px;top:393px;width:39px;height:20px;background:#25711f;border-radius:10px"></div>
<div class="t" style="left:1324.00px;top:398.00px;font-size:11.5px;color:#3d3d3d;font-weight:400;letter-spacing:0.800px;">25.88%</div>
<div class="t" style="left:967.60px;top:420.70px;font-size:11.5px;color:#3d3d3d;font-weight:400;letter-spacing:1.176px;">Индекс стоимости жизни</div>
<div style="position:absolute;left:1160px;top:415.7px;width:150px;height:20px;background:#fff;border-radius:10px;box-shadow:0 1px 2px rgba(0,0,0,.18)"></div>
<div style="position:absolute;left:1160px;top:415.7px;width:144px;height:20px;background:#3dbd31;border-radius:10px"></div>
<div class="t" style="left:1324.00px;top:420.70px;font-size:11.5px;color:#3d3d3d;font-weight:400;letter-spacing:0.000px;">96.1%</div>
<div class="t" style="left:967.60px;top:443.00px;font-size:11.5px;color:#3d3d3d;font-weight:400;letter-spacing:1.067px;">Индекс преступности</div>
<div style="position:absolute;left:1160px;top:438px;width:150px;height:20px;background:#fff;border-radius:10px;box-shadow:0 1px 2px rgba(0,0,0,.18)"></div>
<div style="position:absolute;left:1160px;top:438px;width:55px;height:20px;background:#25711f;border-radius:10px"></div>
<div class="t" style="left:1324.00px;top:443.00px;font-size:11.5px;color:#3d3d3d;font-weight:400;letter-spacing:0.800px;">36.58%</div>
<div class="t" style="left:967.60px;top:466.00px;font-size:11.5px;color:#3d3d3d;font-weight:400;letter-spacing:1.078px;">Индекс безопасности</div>
<div style="position:absolute;left:1160px;top:461px;width:150px;height:20px;background:#fff;border-radius:10px;box-shadow:0 1px 2px rgba(0,0,0,.18)"></div>
<div style="position:absolute;left:1160px;top:461px;width:95px;height:20px;background:#25711f;border-radius:10px"></div>
<div class="t" style="left:1324.00px;top:466.00px;font-size:11.5px;color:#3d3d3d;font-weight:400;letter-spacing:0.800px;">63.42%</div>
<div style="position:absolute;left:169px;top:596px;width:585px;height:2px;background:#b7c2d6"></div>
<div class="t" style="left:221.50px;top:615.00px;font-size:14px;color:#4f4f4f;font-weight:400;letter-spacing:0.664px;">Рестораны, кафе</div>
<svg style="position:absolute;left:174px;top:602px" width="40" height="35" viewBox="0 0 40 35" fill="none" stroke="#1e2b5f" stroke-width="1.2" stroke-linejoin="round" stroke-linecap="round"><path d="M17.3 7.3 L18.5 5.3 L19.7 7.3"/>
<path d="M7.4 19.2 A11.5 11.5 0 0 1 30.4 19.2"/>
<rect x="5.4" y="19.3" width="27.3" height="2.2" rx="1.1" stroke-width="1.4"/>
<path d="M10.4 21.9 L5.6 26.6 L10.6 30.6 L13.3 30.6 L13.3 27.6 L8 23.6"/>
<path d="M13.5 26.6 L22.6 26.6 L27.3 21.9"/>
<path d="M19.4 24.4 L21.5 23 L25.9 22.3"/></svg>
<svg style="position:absolute;left:733px;top:616px" width="10" height="14" viewBox="0 0 10 14"><path d="M2 1.5l5.5 5.5L2 12.5" stroke="#1c2a5c" stroke-width="2.2" fill="none"/></svg>
<div style="position:absolute;left:169px;top:646px;width:585px;height:2px;background:#b7c2d6"></div>
<div class="t" style="left:221.50px;top:665.00px;font-size:14px;color:#4f4f4f;font-weight:400;letter-spacing:0.700px;">Магазины, супермаркеты</div>
<svg style="position:absolute;left:174px;top:652px" width="40" height="35" viewBox="0 0 40 35" fill="none" stroke="#1e2b5f" stroke-width="1.2" stroke-linejoin="round" stroke-linecap="round"><path d="M10.4 13.5 L25.7 13.5 L25.7 17.6"/>
<path d="M10.4 13.5 L10.4 23.3 L12 24.5"/>
<path d="M22.4 18.5 L25.1 18.5 L25.1 22"/>
<path d="M14.5 13.5 L14.5 18"/><rect x="13.2" y="18" width="2.6" height="3.5"/>
<path d="M10.4 13.3 C10 9 11.5 6 13 5.6 C15 5.2 16 7.5 16.5 9 C17.5 6.5 20 6 21 7.5 C22.5 7.8 25.5 9.5 25.7 13.3"/>
<path d="M13 8 C14 10 13.5 11.5 12.5 12.5 M18.5 9.5 L19.5 12 M21.5 10 L23.5 12.5"/>
<rect x="23" y="22.1" width="5.9" height="2.7"/>
<rect x="22.4" y="26.2" width="7.2" height="6.8"/>
<path d="M23.3 27.3 L25.6 30.5 L28.8 27.3"/>
<path d="M16.5 33 L22.4 33"/>
<rect x="7.2" y="28.7" width="9.3" height="4.3"/><path d="M10.4 28.7 V33 M13.3 28.7 V33 M10.4 25.5 V28.7"/></svg>
<svg style="position:absolute;left:733px;top:666px" width="10" height="14" viewBox="0 0 10 14"><path d="M2 1.5l5.5 5.5L2 12.5" stroke="#1c2a5c" stroke-width="2.2" fill="none"/></svg>
<div style="position:absolute;left:169px;top:696px;width:585px;height:2px;background:#b7c2d6"></div>
<div class="t" style="left:222.50px;top:715.00px;font-size:14px;color:#4f4f4f;font-weight:400;letter-spacing:1.175px;">Транспорт</div>
<svg style="position:absolute;left:174px;top:702px" width="40" height="35" viewBox="0 0 40 35" fill="none" stroke="#1e2b5f" stroke-width="1.3" stroke-linejoin="round" stroke-linecap="round"><path d="M7.3 23.3 L5.2 23.3 L5.2 19.4 L9.7 18.2 L13.5 16.9 L15.3 15.4 L26.6 15.4 L29.1 16.9 L32.6 17.4 L32.6 22.4 L30 23.3"/>
<path d="M11.8 23.5 L25.2 23.5"/>
<circle cx="9.5" cy="23" r="2.3"/><circle cx="27.5" cy="23" r="2.3"/>
<path d="M10.4 17.4 L26.6 17.4"/>
<path d="M20.5 14.4 L20.5 23.3"/>
<path d="M17.2 19.5 L18.4 19.5" stroke-width="1.5"/></svg>
<svg style="position:absolute;left:733px;top:716px" width="10" height="14" viewBox="0 0 10 14"><path d="M2 1.5l5.5 5.5L2 12.5" stroke="#1c2a5c" stroke-width="2.2" fill="none"/></svg>
<div style="position:absolute;left:169px;top:746px;width:585px;height:2px;background:#b7c2d6"></div>
<div class="t" style="left:222.50px;top:765.00px;font-size:14px;color:#4f4f4f;font-weight:400;letter-spacing:0.793px;">Аренда квартиры</div>
<svg style="position:absolute;left:174px;top:752px" width="40" height="35" viewBox="0 0 40 35" fill="none" stroke="#1e2b5f" stroke-width="1.2" stroke-linejoin="round" stroke-linecap="round"><rect x="7.5" y="6.8" width="1.8" height="26.5" fill="#aeb6d6" stroke="none"/>
<path d="M7.4 6.5 V33.4"/>
<rect x="5.3" y="7.7" width="27.5" height="1.8" rx="0.9" stroke-width="1.4"/>
<path d="M12 9.6 V11.4 M31 9.6 V11.4"/>
<rect x="10.4" y="11.5" width="22.3" height="7" stroke-width="1.3"/>
<text x="21.5" y="17.3" font-family="Liberation Sans" font-weight="bold" font-size="6.3" text-anchor="middle" fill="#3a4680" stroke="none" letter-spacing="0.2">RENT</text>
<path d="M9.2 23.3 L14.2 20.4 L17.2 22.3 L20.6 20.1 L24 22.3 L27 20.4 L32.7 23.7 V33.4 H7.4"/>
<path d="M11 24.5 L14.2 22.5 L17 24.3 M17.5 24.2 L20.6 22.1 L23.7 24.2 M24.3 24.3 L27 22.5 L30.5 24.7"/>
<rect x="11.8" y="26.5" width="3.6" height="6.9"/><rect x="16.9" y="26.5" width="5.4" height="6.9"/><rect x="24.8" y="26.5" width="5" height="6.9"/></svg>
<svg style="position:absolute;left:733px;top:766px" width="10" height="14" viewBox="0 0 10 14"><path d="M2 1.5l5.5 5.5L2 12.5" stroke="#1c2a5c" stroke-width="2.2" fill="none"/></svg>
<div style="position:absolute;left:169px;top:796px;width:585px;height:2px;background:#b7c2d6"></div>
<div class="t" style="left:221.50px;top:815.00px;font-size:14px;color:#4f4f4f;font-weight:400;letter-spacing:1.011px;">Коммунальные платежи</div>
<svg style="position:absolute;left:174px;top:802px" width="40" height="35" viewBox="0 0 40 35" fill="none" stroke="#1e2b5f" stroke-width="1.25" stroke-linejoin="round" stroke-linecap="round"><rect x="10.2" y="5.4" width="3.6" height="3.2"/>
<path d="M14.5 9.5 H5.2 V21.4 L18.5 7.2 L32.5 21.4 V9.5 H23.3"/>
<circle cx="18.9" cy="14.9" r="1.5"/>
<path d="M7.5 22.1 V29.8 M30.5 22.1 V29.8"/>
<rect x="10.4" y="21.2" width="3.2" height="6.1"/><path d="M10.4 24.4 H13.6 M9.2 27.5 H14.7"/>
<rect x="24.4" y="21.2" width="3.2" height="6.1"/><path d="M24.4 24.4 H27.6 M23.3 27.5 H28.7"/>
<path d="M16.3 31.2 V21.4 H21.5 V31.2"/><path d="M20.8 26.6 V27.2"/>
<path d="M23.7 31.6 H14.4 V33.8 M16.3 33.6 H30.5"/>
<path d="M5.2 33.6 V31 C6 30 8 30 9 30.6 C10.5 30 11.8 31 11.8 32.5 L11.5 33.6 Z"/>
<path d="M25.9 33.6 V31 C27 30 29 30 30 30.6 C31.5 30.2 32.5 31 32.5 32.5 V33.6 Z"/></svg>
<svg style="position:absolute;left:733px;top:816px" width="10" height="14" viewBox="0 0 10 14"><path d="M2 1.5l5.5 5.5L2 12.5" stroke="#1c2a5c" stroke-width="2.2" fill="none"/></svg>
<div style="position:absolute;left:169px;top:846px;width:585px;height:2px;background:#b7c2d6"></div>
<div class="t" style="left:221.50px;top:865.00px;font-size:14px;color:#4f4f4f;font-weight:400;letter-spacing:0.895px;">Стоимость недвижимости</div>
<svg style="position:absolute;left:174px;top:852px" width="40" height="35" viewBox="0 0 40 35" fill="none" stroke="#1e2b5f" stroke-width="1.2" stroke-linejoin="round" stroke-linecap="round"><rect x="7.7" y="6.3" width="11.9" height="3.2" stroke="#3c4675"/>
<path d="M19.5 20 V9.5 H5.4 V32.5 H19.5" stroke="#3c4675"/>
<path d="M8.1 12.6 H10.8 M12 12.6 H14.7 M16 12.6 H18.9 M8.1 16.5 H10.8 M12 16.5 H14.7 M16 16.5 H18.9 M8.1 19.6 H10.8 M12 19.6 H14.7 M16 19.6 H18.9 M8.1 23.3 H10.8 M12 23.3 H14.7 M16 23.3 H18.5" stroke="#4a5580" stroke-width="1.3"/>
<path d="M10.4 32.5 V25.3 H16.3 V32.5" stroke="#3c4675"/>
<circle cx="25.5" cy="26.2" r="6.9" stroke="#3c4675"/>
<path d="M27.3 23.6 C26.5 22.4 23.5 22.4 23.5 24.5 C23.5 26.5 27.6 26 27.6 28.3 C27.6 30.4 24.3 30.4 23.5 29.1 M25.5 21.8 V22.6 M25.5 30.3 V31" stroke="#3c4675"/></svg>
<svg style="position:absolute;left:730px;top:868px" width="15" height="10" viewBox="0 0 15 10"><path d="M1.5 2l6 5.5 6-5.5" stroke="#1c2a5c" stroke-width="2.2" fill="none"/></svg>
<div style="position:absolute;left:784px;top:596px;width:585px;height:2px;background:#b7c2d6"></div>
<div class="t" style="left:836.20px;top:615.00px;font-size:14px;color:#4f4f4f;font-weight:400;letter-spacing:0.817px;">Спорт и Отдых</div>
<svg style="position:absolute;left:789px;top:602px" width="40" height="35" viewBox="0 0 40 35" fill="none" stroke="#1e2b5f" stroke-width="1.25" stroke-linejoin="round" stroke-linecap="round"><rect x="14.7" y="17.2" width="8.6" height="4.3"/>
<rect x="10.4" y="13.3" width="4.3" height="12.4"/><rect x="7.4" y="14.2" width="3" height="10.6"/><rect x="5.2" y="17.2" width="2.2" height="4.3"/>
<rect x="23.3" y="13.3" width="4.3" height="12.4"/><rect x="27.6" y="14.2" width="3.1" height="10.6"/><rect x="30.7" y="17.2" width="2" height="4.3"/></svg>
<svg style="position:absolute;left:1347px;top:616px" width="10" height="14" viewBox="0 0 10 14"><path d="M2 1.5l5.5 5.5L2 12.5" stroke="#1c2a5c" stroke-width="2.2" fill="none"/></svg>
<div style="position:absolute;left:784px;top:646px;width:585px;height:2px;background:#b7c2d6"></div>
<div class="t" style="left:836.20px;top:665.00px;font-size:14px;color:#4f4f4f;font-weight:400;letter-spacing:0.838px;">Одежда и обувь</div>
<svg style="position:absolute;left:789px;top:652px" width="40" height="35" viewBox="0 0 40 35" fill="none" stroke="#1e2b5f" stroke-width="1.15" stroke-linejoin="round" stroke-linecap="round"><path d="M17.3 7.9 C17.5 5.5 20.6 5.6 20.5 7.8 C20.4 9 19 9.6 18.9 10.4"/>
<path d="M18.9 10.4 L7 15.4 L30.7 15.4 Z" stroke-width="1.1"/>
<path d="M14.6 14.5 L15.4 24 L16.2 14.5 M15.8 16.9 L19.4 20.1 M19.4 15.5 V20 M20.1 15.1 C20 21 21 23.3 23.3 23.3 C25.8 23.3 26.6 21 26.6 15.1"/>
<path d="M5.4 31.7 C5.5 30 9 29.5 11.8 28.7 C15 27.5 17.5 25.8 19.6 24.8 C21 25.8 22 26.2 23 26.2 C25 26.2 26 26 27.3 25.9 C28.5 25.5 29.5 24.6 30.5 24.4 C31.5 25 32.7 26 32.7 27.3 V33 H24.8 M21.5 32.8 L8 33 C6.5 33 5.4 32.6 5.4 31.7"/>
<path d="M6 31.5 C8 31 10 30.8 12 30.5"/></svg>
<svg style="position:absolute;left:1347px;top:666px" width="10" height="14" viewBox="0 0 10 14"><path d="M2 1.5l5.5 5.5L2 12.5" stroke="#1c2a5c" stroke-width="2.2" fill="none"/></svg>
<div style="position:absolute;left:784px;top:696px;width:585px;height:2px;background:#b7c2d6"></div>
<div class="t" style="left:836.20px;top:715.00px;font-size:14px;color:#4f4f4f;font-weight:400;letter-spacing:0.692px;">Уход за детьми</div>
<svg style="position:absolute;left:789px;top:702px" width="40" height="35" viewBox="0 0 40 35" fill="none" stroke="#1e2b5f" stroke-width="1.15" stroke-linejoin="round" stroke-linecap="round"><ellipse cx="16.3" cy="7.4" rx="3.1" ry="1.4"/>
<path d="M12.8 8.8 C9.5 10.5 9.6 15 10.5 17.5"/><path d="M19.8 8.8 C23 10.5 23 14 22.2 16"/>
<path d="M10.8 15.4 C12.5 13.5 14 13.2 15 13.5 C17 14 19.5 14.8 21.6 15.5"/>
<path d="M10.6 16 C10.2 19.5 12.5 22.3 16 22.3 C19.3 22.3 21.6 20 21.6 15.5"/>
<path d="M14.3 16.6 V17.4 M18.5 16.6 V17.4" stroke="#8088b0"/>
<path d="M15.2 19.5 Q16.3 20.3 17.5 19.5"/>
<path d="M14.2 22.6 L12.9 25.1 L14.7 27.6 M12.9 25.1 C10.5 25.6 8.6 26.2 8.5 27.5 V33.4 M8.6 30.2 H11.3 V33.4" />
<circle cx="25.9" cy="23.6" r="3.4"/><circle cx="25.2" cy="24" r="1.5" stroke="#5560a0"/>
<path d="M21 20.3 C17.5 23 15.5 28 17 31 C18 33 21 33.5 23 32 M20 28.5 L24.5 33 M24.8 27 L27.6 32.7"/></svg>
<svg style="position:absolute;left:1347px;top:716px" width="10" height="14" viewBox="0 0 10 14"><path d="M2 1.5l5.5 5.5L2 12.5" stroke="#1c2a5c" stroke-width="2.2" fill="none"/></svg>
<div style="position:absolute;left:784px;top:746px;width:585px;height:2px;background:#b7c2d6"></div>
<div class="t" style="left:836.20px;top:765.00px;font-size:14px;color:#4f4f4f;font-weight:400;letter-spacing:1.267px;">Уровень жизни</div>
<svg style="position:absolute;left:789px;top:752px" width="40" height="35" viewBox="0 0 40 35" fill="none" stroke="#1e2b5f" stroke-width="1.2" stroke-linejoin="round" stroke-linecap="round"><path d="M19 6.3 L23.7 14.2 L32.7 16.2 L26.8 23.3 L27.5 32.5 L19 28.7 L10.6 32.5 L11.5 22.6 L5.2 16.2 L14.4 14.2 Z"/></svg>
<svg style="position:absolute;left:1347px;top:766px" width="10" height="14" viewBox="0 0 10 14"><path d="M2 1.5l5.5 5.5L2 12.5" stroke="#1c2a5c" stroke-width="2.2" fill="none"/></svg>
<div style="position:absolute;left:784px;top:796px;width:585px;height:2px;background:#b7c2d6"></div>
<div class="t" style="left:836.20px;top:815.00px;font-size:14px;color:#4f4f4f;font-weight:400;letter-spacing:0.900px;">Криминал, преступность</div>
<svg style="position:absolute;left:789px;top:802px" width="40" height="35" viewBox="0 0 40 35" fill="none" stroke="#1e2b5f" stroke-width="1.2" stroke-linejoin="round" stroke-linecap="round"><circle cx="12" cy="26.6" r="6.4"/><circle cx="12" cy="26.6" r="5.1"/>
<circle cx="25.7" cy="12.4" r="6.1"/><circle cx="25.7" cy="12.4" r="4.9" stroke-dasharray="1.5 1"/>
<path d="M7.3 21.2 V17.2 H11.5 M16.5 21.5 V8.6 C17.5 7.5 19.5 7 22.3 6.8 M16.5 16.5 L19.5 16.5 C20.5 16 21 15.5 21.5 14.8"/>
<path d="M11.2 17 C10.8 15 12 13.5 13.8 13 L15.5 12.5 M13.8 19 L15.6 21"/></svg>
<svg style="position:absolute;left:1347px;top:816px" width="10" height="14" viewBox="0 0 10 14"><path d="M2 1.5l5.5 5.5L2 12.5" stroke="#1c2a5c" stroke-width="2.2" fill="none"/></svg>
<div style="position:absolute;left:784px;top:846px;width:585px;height:2px;background:#b7c2d6"></div>
<div class="t" style="left:836.20px;top:865.00px;font-size:14px;color:#4f4f4f;font-weight:400;letter-spacing:0.671px;">Медицина</div>
<svg style="position:absolute;left:789px;top:852px" width="40" height="35" viewBox="0 0 40 35" fill="none" stroke="#1e2b5f" stroke-width="1.2" stroke-linejoin="round" stroke-linecap="round"><g transform="rotate(-62 14.2 16.5)"><rect x="4.5" y="12.3" width="19.4" height="8.4" rx="4.2"/><path d="M14.2 12.3 V20.7"/></g>
<rect x="18.4" y="25.1" width="14.1" height="7.4" rx="1.3"/>
<path d="M20.5 24.4 H30.5 M18.7 27.6 H23.3 L24.8 28.7 H27.6 L28.7 27.6 H32.5 M27.6 30.5 H31.6"/></svg>
<svg style="position:absolute;left:1347px;top:866px" width="10" height="14" viewBox="0 0 10 14"><path d="M2 1.5l5.5 5.5L2 12.5" stroke="#1c2a5c" stroke-width="2.2" fill="none"/></svg>
<div style="position:absolute;left:784px;top:896px;width:585px;height:2px;background:#b7c2d6"></div>
<div class="t" style="left:836.20px;top:915.00px;font-size:14px;color:#4f4f4f;font-weight:400;letter-spacing:0.920px;">Загрязнение</div>
<svg style="position:absolute;left:789px;top:902px" width="40" height="35" viewBox="0 0 40 35" fill="none" stroke="#1e2b5f" stroke-width="1.2" stroke-linejoin="round" stroke-linecap="round"><path d="M18.8 6.8 A12.6 12.6 0 0 0 14.5 31.3" stroke-width="1.8" stroke-dasharray="3 1.2"/>
<path d="M17.5 6.8 A12.6 12.6 0 0 1 31.4 19.5" stroke-width="1.8" stroke-dasharray="3 1.2"/>
<path d="M9.3 19.4 V15 L12 11.8 L16.3 15.2 V19.4 Z"/>
<path d="M21.5 19.4 V15.2 L25.5 11.8 L28.7 15 V19.4 Z"/>
<path d="M16.6 23 L21.6 24.2 L21.6 29.5 M16.4 23.2 L14.2 27 L16.5 30.5"/>
<circle cx="18.9" cy="19.2" r="1.6"/>
<rect x="23.2" y="21.3" width="8.4" height="1.8" stroke-width="1.3"/><rect x="23.2" y="24.1" width="8.4" height="1.8" stroke-width="1.3"/><rect x="23.2" y="26.9" width="8.4" height="1.8" stroke-width="1.3"/><rect x="23.2" y="29.8" width="8.4" height="2.2" stroke-width="1.3"/>
<path d="M16 31.8 H22.5" stroke-width="1.5"/></svg>
<svg style="position:absolute;left:1347px;top:916px" width="10" height="14" viewBox="0 0 10 14"><path d="M2 1.5l5.5 5.5L2 12.5" stroke="#1c2a5c" stroke-width="2.2" fill="none"/></svg>
<div style="position:absolute;left:169px;top:901px;width:585px;height:26px;background:#eaedf2"></div>
<div class="t" style="left:174.30px;top:909.00px;font-size:12px;color:#444;font-weight:400;letter-spacing:0.904px;">Цена за м2 на покупку квартиры в центре города</div>
<div class="t" style="left:530.00px;top:908.20px;font-size:12px;color:#444;font-weight:400;letter-spacing:0.808px;">82 939.50 NOK</div>
<div class="t" style="left:634.70px;top:908.20px;font-size:12px;color:#444;font-weight:400;letter-spacing:1.487px;">66 000 - 100 000</div>
<div class="t" style="left:174.30px;top:933.80px;font-size:12px;color:#444;font-weight:400;letter-spacing:0.822px;">Цена за м2 на покупку квартиры за пределами центра</div>
<div class="t" style="left:174.30px;top:946.00px;font-size:12px;color:#444;font-weight:400;letter-spacing:1.540px;">города</div>
<div class="t" style="left:529.00px;top:939.50px;font-size:12px;color:#444;font-weight:400;letter-spacing:0.892px;">54 724.40 NOK</div>
<div class="t" style="left:644.00px;top:939.50px;font-size:12px;color:#444;font-weight:400;letter-spacing:1.357px;">35 000 - 75 000</div>
</body></html>
